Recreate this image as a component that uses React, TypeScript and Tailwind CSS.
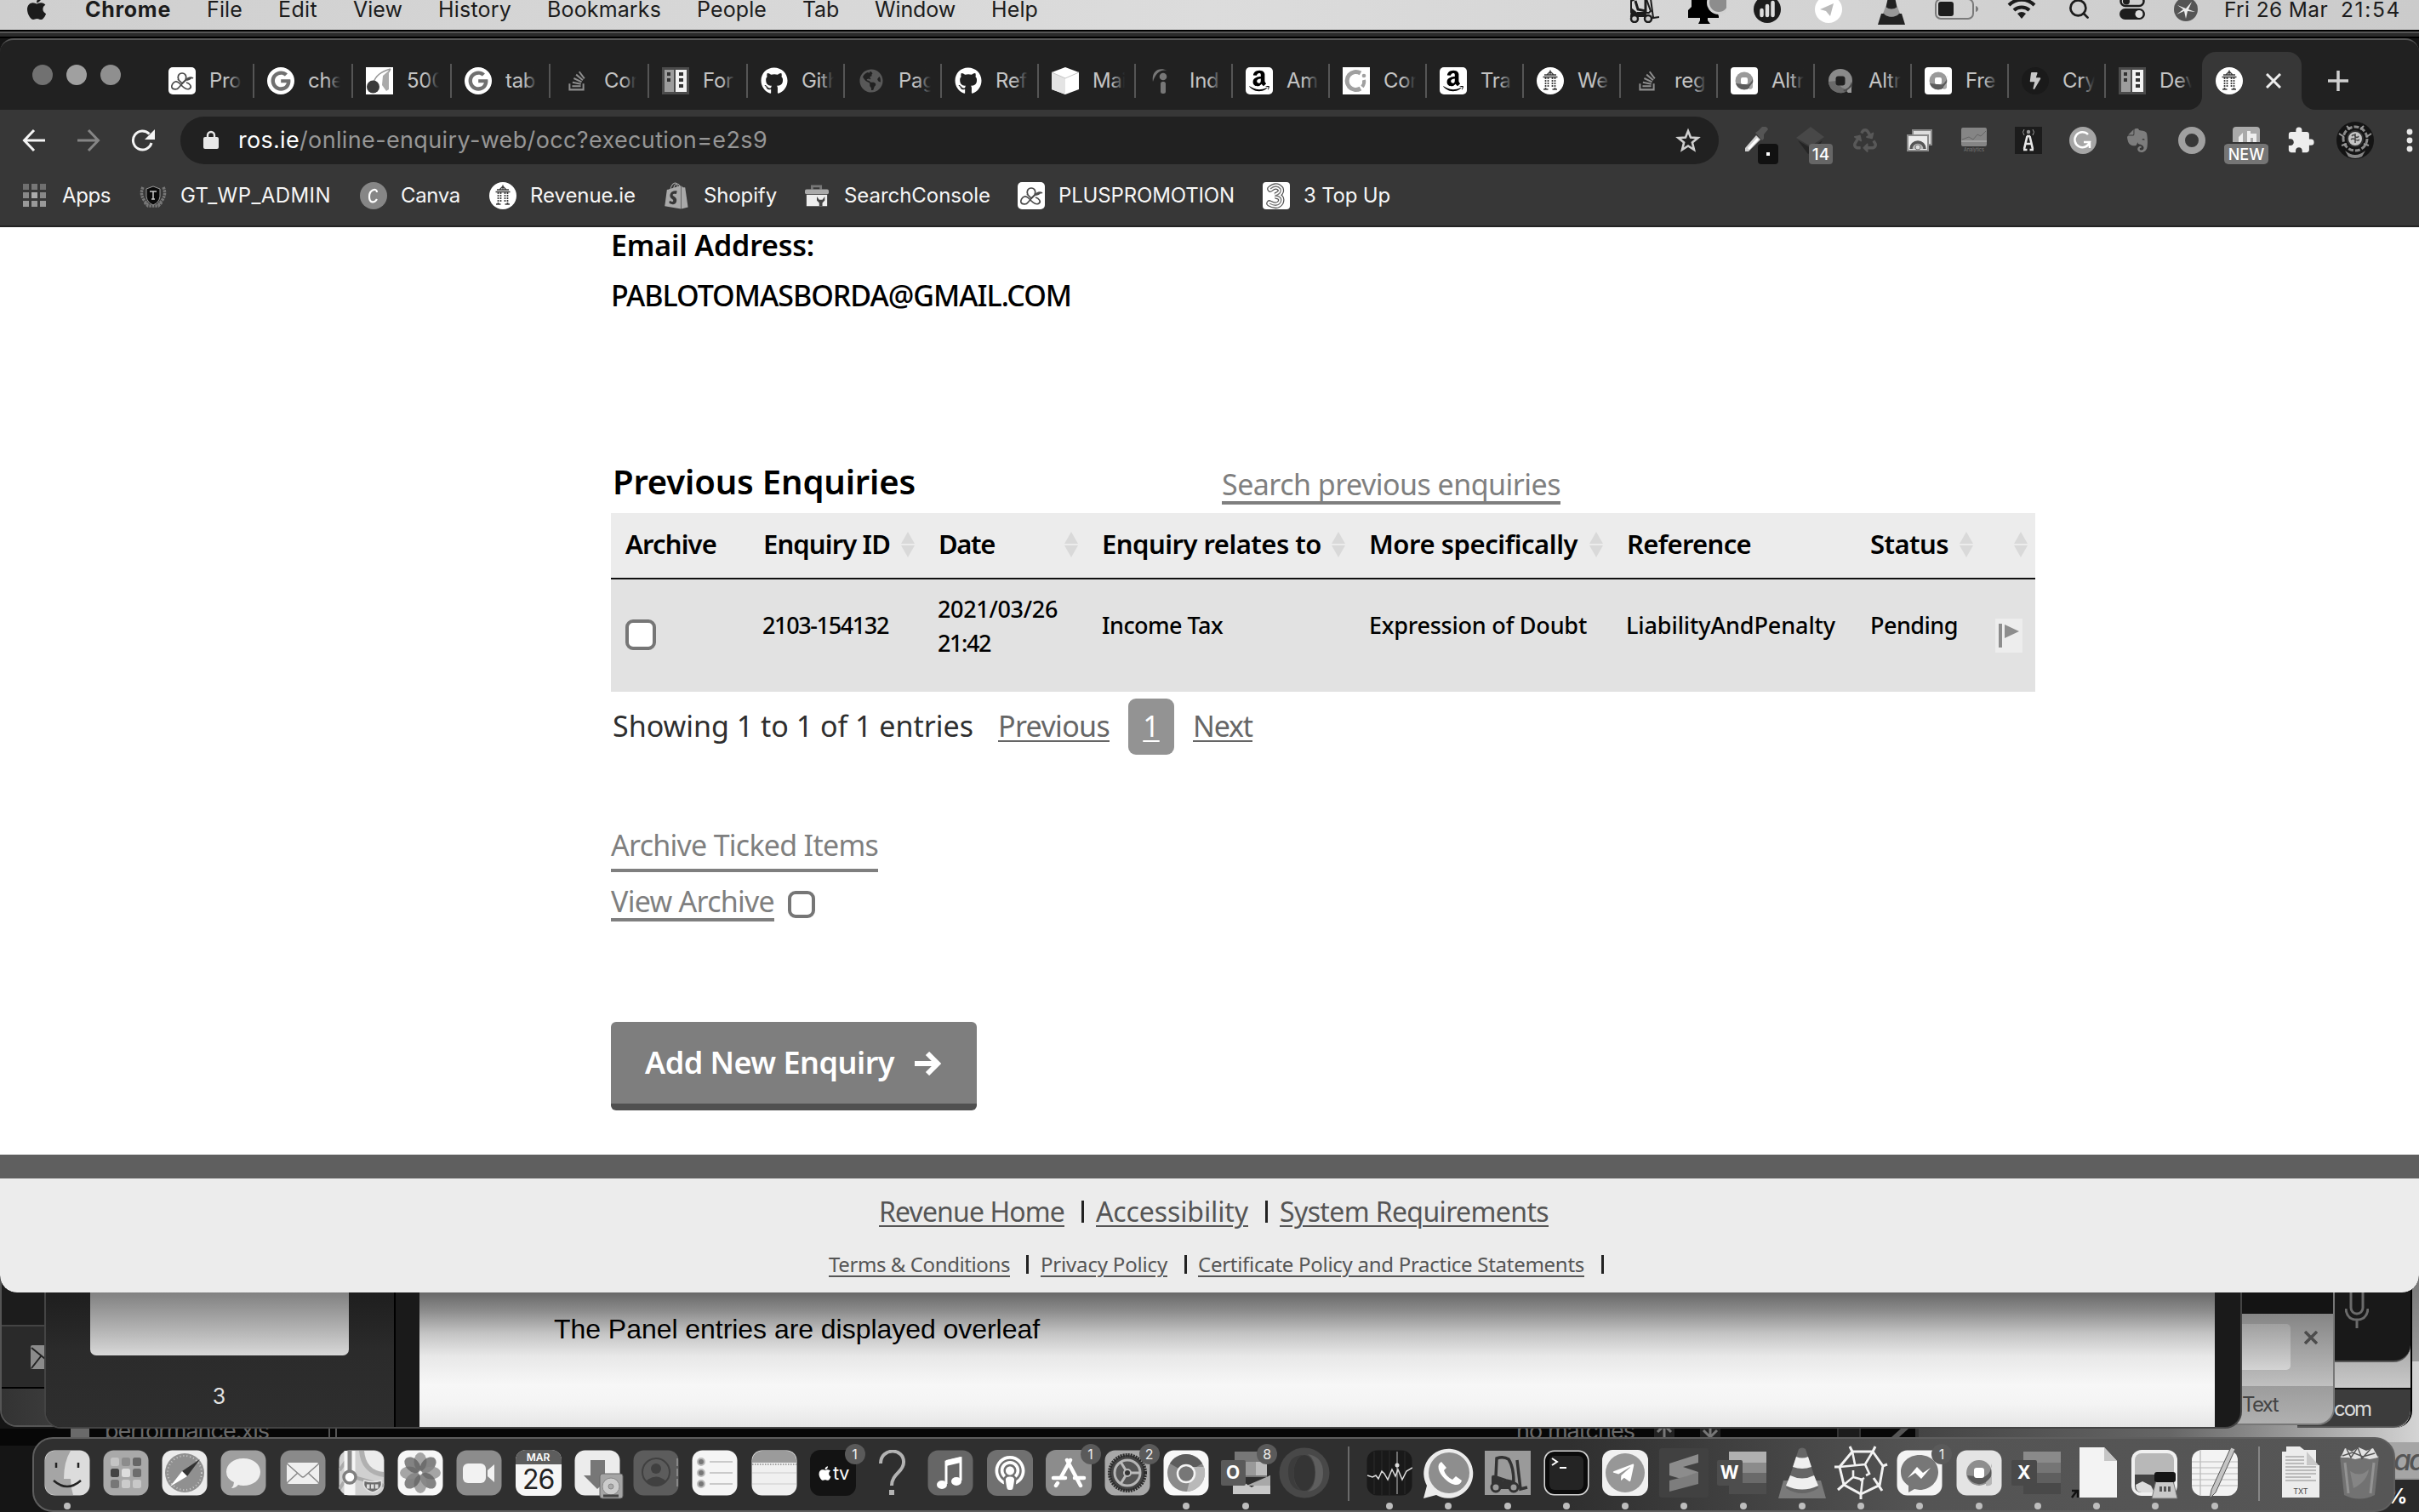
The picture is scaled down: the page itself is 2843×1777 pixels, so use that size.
import { useLayoutEffect, useRef, type ReactNode } from 'react';
import {
  FaApple, FaGithub, FaGoogle, FaStackOverflow, FaAmazon, FaShopify, FaEvernote, FaRecycle,
  FaGlobeAmericas, FaBolt, FaTelegramPlane, FaPodcast,
} from 'react-icons/fa';
import { MdExtension } from 'react-icons/md';
import { Search } from 'lucide-react';

/** One line of text whose tracking is adjusted so that it fills its box. */
function Fit({ className, children }: { className: string; children: string }) {
  const box = useRef<HTMLSpanElement>(null);
  const text = useRef<HTMLSpanElement>(null);
  useLayoutEffect(() => {
    const b = box.current, t = text.current;
    if (!b || !t) return;
    t.style.letterSpacing = '0px';
    const gap = b.clientWidth - t.getBoundingClientRect().width;
    t.style.letterSpacing = gap / children.length + 'px';
  }, [children]);
  return (
    <span ref={box} className={'block shrink-0 whitespace-nowrap ' + className}>
      <span ref={text}>{children}</span>
    </span>
  );
}

/* ---------- favicons ---------- */
const Box = ({ children }: { children: ReactNode }) => (
  <span className="flex size-8 shrink-0 items-center justify-center">{children}</span>
);
const Plus = () => (
  <svg viewBox="0 0 32 32" className="size-8 shrink-0">
    <rect width="32" height="32" rx="5" fill="#fff" />
    <g fill="none" stroke="#4a4a4a" strokeWidth="1.700" strokeLinejoin="round">
      <path d="M12 15c-2-4 0-8 4-8s6 4 4 8l-8 9c-2 3-7 2-8 0s1-6 4-7 5 2 8 5 6 5 9 3 0-6-4-7" />
      <path d="M11 14l5 5 7-6q3-2 6 0M20 15q5 0 7-3" />
    </g>
  </svg>
);
const Goog = () => (
  <Box><span className="flex size-8 items-center justify-center rounded-full bg-white"><FaGoogle className="size-6 text-[#707070]" /></span></Box>
);
const Cherry = () => (
  <svg viewBox="0 0 32 32" className="size-8 shrink-0">
    <rect width="32" height="32" fill="#fff" />
    <path d="M9 18C11 11 18 5 29 2M29 2c-4 6-5 9-4 14" stroke="#999" strokeWidth="1.500" fill="none" />
    <path d="M20 10l7-6v22l-3 2-5-7z" fill="#aaa" />
    <circle cx="8.500" cy="23" r="7.500" fill="#3a3a3a" />
  </svg>
);
const Stack = () => <Box><FaStackOverflow className="size-[26px] text-[#8e8e8e]" /></Box>;
const Server = () => (
  <svg viewBox="0 0 32 32" className="size-8 shrink-0">
    <rect width="32" height="32" fill="#4b4b4b" />
    <path d="M3 3h11v26H3z" fill="#9d9d9d" /><path d="M16 3h13v26H16z" fill="#f2f2f2" />
    <path d="M6 6h4v4H6zM6 13h4v4H6zM20 6h5v4h-5zM20 13h5v4h-5zM20 20h5v4h-5z" fill="#333" />
  </svg>
);
const Git = () => <Box><FaGithub className="size-8 text-white" /></Box>;
const Globe = () => <Box><FaGlobeAmericas className="size-7 text-[#585858]" /></Box>;
const Cube = () => (
  <svg viewBox="0 0 32 32" className="size-8 shrink-0">
    <path d="M16 0l16 6v20l-16 6L0 26V6z" fill="#fff" />
    <path d="M0 6l16 7v19L0 26z" fill="#e4e4e4" /><path d="M0 6l16 7 16-7" fill="none" stroke="#c4c4c4" />
  </svg>
);
const Indeed = () => (
  <svg viewBox="0 0 32 32" className="size-8 shrink-0">
    <path d="M5 17C3 6 11-1 22 4 13 2 8 8 5 17z" fill="#777" />
    <circle cx="17" cy="11" r="4.300" fill="#777" /><rect x="14" y="17" width="6" height="14" rx="2.500" fill="#777" />
  </svg>
);
const Amz = () => (
  <Box><span className="flex size-8 items-center justify-center rounded-[5px] bg-white"><FaAmazon className="size-7 text-black" /></span></Box>
);
const Cc = () => (
  <svg viewBox="0 0 32 32" className="size-8 shrink-0">
    <rect width="32" height="32" fill="#fff" />
    <path d="M21 7A10.500 10.500 0 1 0 21 25" fill="none" stroke="#a0a0a0" strokeWidth="5" />
    <path d="M25 15q1 4-2 8" stroke="#a0a0a0" strokeWidth="4" fill="none" /><circle cx="25" cy="10" r="2.300" fill="#a0a0a0" />
  </svg>
);
const Harp = () => (
  <svg viewBox="0 0 32 32" className="size-8 shrink-0">
    <circle cx="16" cy="16" r="16" fill="#fff" />
    <g stroke="#3c3c3c" fill="none">
      <path d="M16 3.500v5M16 5l-4 4M16 5l4 4M9 9h14M7.500 11.500h17" strokeWidth="1.300" />
      <path d="M10.500 12v14M13.500 12v12M18.500 12v12M21.500 12v14" strokeWidth="1.700" strokeDasharray="2 1" />
      <path d="M8 26h5.500M18.500 26H24" strokeWidth="1.500" />
    </g>
  </svg>
);
const Alt = ({ bg }: { bg?: boolean }) =>
  bg ? (
    <svg viewBox="0 0 32 32" className="size-8 shrink-0">
      <rect width="32" height="32" rx="4" fill="#fff" />
      <circle cx="16" cy="16" r="10.500" fill="#9a9a9a" />
      <path d="M6 19a10.500 10.500 0 0 0 20 0V9.500a10 10 0 0 1-6 11z" fill="#5c5c5c" />
      <path d="M22 23l4-5v6q-1 2-4 2z" fill="#aaa" />
      <rect x="12" y="12" width="8" height="8" rx="2" fill="#fff" />
    </svg>
  ) : (
    <svg viewBox="0 0 32 32" className="size-8 shrink-0">
      <circle cx="15" cy="16" r="14" fill="#8a8a8a" />
      <path d="M1 17a14 14 0 0 0 24 9q-10 0-15-10z" fill="#6a6a6a" />
      <path d="M28 17q-2 8-10 10l3 2q5-1 8-6z" fill="#4b4b4b" />
      <path d="M23 27l5-4v7h-4q-2-1-1-3z" fill="#999" />
      <rect x="9.500" y="10.500" width="11" height="11" rx="3" fill="#212121" />
    </svg>
  );
const Bolt = () => (
  <Box><span className="flex size-8 items-center justify-center rounded-full bg-[#1a1a1a]"><FaBolt className="size-5 text-[#c8c8c8]" /></span></Box>
);

const wideTabs: [ReactNode, string][] = [
  [<Plus />, 'Pro'], [<Goog />, 'che'], [<Cherry />, '500'], [<Goog />, 'tab'], [<Stack />, 'Cor'], [<Server />, 'For'],
];
const tabs: [ReactNode, string][] = [
  [<Git />, 'Gith'], [<Globe />, 'Pag'], [<Git />, 'Ref'], [<Cube />, 'Mai'], [<Indeed />, 'Ind'],
  [<Amz />, 'Am'], [<Cc />, 'Cor'], [<Amz />, 'Tra'], [<Harp />, 'We'], [<Stack />, 'reg'], [<Alt bg />, 'Altr'],
  [<Alt />, 'Altr'], [<Alt bg />, 'Fre'], [<Bolt />, 'Cry'], [<Server />, 'Dev'],
];
function Tab({ icon, label, last, wide }: { icon: ReactNode; label: string; last?: boolean; wide?: boolean }) {
  return (
    <div className={'flex h-10 shrink-0 items-center pl-[15px] ' + (wide ? 'w-[116px] ' : 'w-[114px] ') + (last ? '' : 'border-r-2 border-[#555]')}>
      {icon}
      <span className="relative ml-4 block w-[38px] overflow-hidden whitespace-nowrap text-[24px] leading-10 tracking-[-0.3px] text-[#c4c4c4]">
        {label}
        <span className="absolute inset-y-0 right-0 w-4 bg-gradient-to-r from-transparent to-[#212121]" />
      </span>
    </div>
  );
}

/* ---------- menu bar ---------- */
function MenuBar() {
  return (
    <div className="flex h-[35px] w-full shrink-0 items-start bg-gradient-to-r from-[#cfcfcf] via-[#dcdcdc] to-[#cbcbcb] text-[25px] leading-[22px] text-[#1c1c1c]">
      <FaApple className="-mt-[5px] ml-[28px] size-[30px]" />
      <Fit className="ml-[42px] w-[101px] font-bold">Chrome</Fit>
      <Fit className="ml-[42px] w-[42px]">File</Fit>
      <Fit className="ml-[42px] w-[46px]">Edit</Fit>
      <Fit className="ml-[42px] w-[58px]">View</Fit>
      <Fit className="ml-[42px] w-[86px]">History</Fit>
      <Fit className="ml-[42px] w-[134px]">Bookmarks</Fit>
      <Fit className="ml-[42px] w-[82px]">People</Fit>
      <Fit className="ml-[42px] w-[43px]">Tab</Fit>
      <Fit className="ml-[42px] w-[95px]">Window</Fit>
      <Fit className="ml-[42px] w-[55px]">Help</Fit>
      <svg viewBox="0 0 36 36" className="-mt-[9px] ml-[694px] size-9" fill="none" stroke="#1c1c1c" strokeWidth="2">
        <path d="M3 24V10l5-2h13l5 14-2 2H10" /><path d="M4 20l6 5h9l3 3H3z" fill="#1c1c1c" /><path d="M8 10l3 10 9 2V8" strokeWidth="3" /><path d="M25 0l4 30 7-1" />
        <circle cx="7" cy="31" r="4" strokeWidth="2.500" fill="#ccc" /><circle cx="23" cy="31" r="4" strokeWidth="2.500" fill="#ccc" />
      </svg>
      <svg viewBox="0 0 48 36" className="-mt-[8px] ml-[31px] h-9 w-12">
        <path d="M7 0h30v22l2 5v2H3V20l4-4zM17 29h9v3l3 4H15l2-4z" fill="#000" /><circle cx="39" cy="11" r="14" fill="#d2d2d2" /><circle cx="39" cy="11" r="11" fill="#8d8d8d" />
      </svg>
      <svg viewBox="0 0 32 32" className="-mt-[5px] ml-[32px] size-8">
        <circle cx="16" cy="16" r="16" fill="#1c1c1c" /><path d="M9.500 17v6M16 12v11M22.500 8v15" stroke="#ddd" strokeWidth="4.500" strokeLinecap="round" />
      </svg>
      <svg viewBox="0 0 32 32" className="-mt-[5px] ml-[40px] size-8">
        <circle cx="16" cy="16" r="16" fill="#fff" /><path d="M6 16L22 9l-4 15-5-6z" fill="#bbb" />
      </svg>
      <svg viewBox="0 0 32 34" className="-mt-[5px] ml-[42px] h-[34px] w-8">
        <path d="M12 2h8l4 18H8z" fill="#222" /><path d="M12 0h8l1 5H11zM9 13q7 5 14 0l3 8c-5 5-15 5-20 0z" fill="#999" /><path d="M4 21h3c4 5 14 5 18 0h3l4 13H0z" fill="#222" />
      </svg>
      <svg viewBox="0 0 52 26" className="-mt-[2px] ml-[35px] h-[26px] w-[52px]">
        <rect x="1" y="1" width="44" height="23" rx="6" fill="none" stroke="#7a7a7a" strokeWidth="2" /><rect x="4" y="4" width="18" height="17" rx="3" fill="#1c1c1c" /><path d="M48 9c4 1 4 6 0 7z" fill="#7a7a7a" />
      </svg>
      <svg viewBox="0 0 34 26" className="-mt-[4px] ml-[33px] h-[26px] w-[34px]" fill="none" stroke="#1c1c1c" strokeWidth="4">
        <path d="M2 10a21 21 0 0 1 30 0M8 16a13 13 0 0 1 18 0" /><path d="M12 20q5-4 10 0l-5 6z" fill="#1c1c1c" stroke="none" />
      </svg>
      <Search className="-mt-[3px] ml-[37px] size-[27px] text-[#1c1c1c]" strokeWidth={2.4} />
      <svg viewBox="0 0 30 28" className="-mt-[5px] ml-[34px] h-[28px] w-[30px]">
        <rect x="1.500" y="1" width="27" height="11" rx="5.500" fill="none" stroke="#1c1c1c" strokeWidth="2.500" /><circle cx="8" cy="6.500" r="4" fill="#1c1c1c" />
        <rect x="0" y="15" width="30" height="13" rx="6.500" fill="#1c1c1c" /><circle cx="23" cy="21.500" r="4.500" fill="#ddd" />
      </svg>
      <svg viewBox="0 0 28 28" className="-mt-[3px] ml-[34px] size-7">
        <circle cx="14" cy="14" r="14" fill="#555" /><path d="M4 9l10 4 7-8-4 9 8 3-9-1-2 9-2-9-9 4 8-6z" fill="#eee" />
      </svg>
      <Fit className="ml-[31px] w-[122px] text-[24.500px]">Fri 26 Mar</Fit>
      <Fit className="ml-[15px] w-[71px] text-[24.500px]">21:54</Fit>
    </div>
  );
}

/* ---------- toolbar ---------- */
function Toolbar() {
  return (
    <div className="flex h-[72px] items-center text-[#f1f1f1]">
      <svg viewBox="0 0 28 28" className="ml-[26px] size-7 shrink-0" fill="none" stroke="#f4f4f4" strokeWidth="3"><path d="M27 14H3M14 2L2.500 14 14 26" /></svg>
      <svg viewBox="0 0 28 28" className="ml-[36px] size-7 shrink-0" fill="none" stroke="#858585" strokeWidth="3"><path d="M1 14h24M14 2l11.500 12L14 26" /></svg>
      <svg viewBox="0 0 28 28" className="ml-[36px] size-7 shrink-0"><path d="M24 17A11 11 0 1 1 21.500 6.500" fill="none" stroke="#f4f4f4" strokeWidth="3" /><path d="M28 1v12H16z" fill="#f4f4f4" /></svg>
      <div className="ml-[30px] flex h-14 w-[1808px] shrink-0 items-center rounded-full bg-[#212121]">
        <svg viewBox="0 0 18 24" className="ml-[27px] h-6 w-[18px]"><rect y="8" width="18" height="14" rx="2" fill="#e8e8e8" /><path d="M5 9V6a4 4 0 0 1 8 0v3" fill="none" stroke="#e8e8e8" strokeWidth="2.400" /></svg>
        <Fit className="ml-[23px] w-[72px] text-[27px] text-white">ros.ie</Fit>
        <Fit className="w-[550px] text-[27px] text-[#969696]">/online-enquiry-web/occ?execution=e2s9</Fit>
        <svg viewBox="0 0 30 30" className="ml-auto mr-[21px] size-[30px]"><path d="M15 4l3 7.500 8.500.6-6.600 5.400 2.100 8.500L15 21.500 8 26l2.100-8.500-6.600-5.400 8.500-.6z" fill="none" stroke="#cfcfcf" strokeWidth="2.600" /></svg>
      </div>
      <div className="ml-[12px] flex shrink-0 items-center">
        <span className="relative flex w-16 justify-center">
          <svg viewBox="0 0 32 32" className="size-8"><path d="M3 25L16 10l5 5L7 29H3z" fill="#cfcfcf" /><path d="M6 25L17 13l2 2L8 27z" fill="#fff" /><path d="M15 7l3-2 5-5q6-1 7 3l-5 6v5l-2 2z" fill="#555" /></svg>
          <span className="absolute left-[34px] top-[20px] flex h-6 w-6 items-center justify-center rounded-[4px] bg-[#111]"><span className="size-[4px] bg-white" /></span>
        </span>
        <span className="relative flex w-16 justify-center">
          <svg viewBox="0 0 34 34" className="size-[34px]"><path d="M17 1l16 12-16 11L0 14z" fill="#484848" /><path d="M2 17l15 9 14-9-5 8-12 8z" fill="#252525" /></svg>
          <span className="absolute left-[30px] top-[21px] h-6 w-7 rounded-[4px] bg-[#666] text-center text-[19px] font-medium leading-[26px] text-white">14</span>
        </span>
        <span className="flex w-16 justify-center"><FaRecycle className="size-[28px] text-[#585858]" /></span>
        <span className="flex w-16 justify-center">
          <svg viewBox="0 0 32 28" className="h-7 w-8"><path d="M8 2h22v17H8z" fill="#ddd" stroke="#8a8a8a" strokeWidth="2" /><path d="M2 8h24v18H2z" fill="#ececec" stroke="#8a8a8a" strokeWidth="2" /><path d="M6 24a8 8 0 0 1 16 0" fill="#bbb" stroke="#555" strokeWidth="3.500" /><circle cx="14" cy="22" r="3" fill="#ddd" stroke="#777" /></svg>
        </span>
        <span className="flex w-16 flex-col items-center">
          <svg viewBox="0 0 30 22" className="h-[22px] w-[30px]"><rect width="30" height="22" rx="2" fill="#858585" /><path d="M1 14l8-3 5 3 5-6 4 2 6-6" fill="none" stroke="#666" /><path d="M0 16h30" stroke="#bbb" /></svg>
          <span className="text-[5.500px] leading-[8px] text-[#7a7a7a]">Analytics</span>
        </span>
        <span className="flex w-16 justify-center">
          <svg viewBox="0 0 32 32" className="size-8"><rect width="32" height="32" fill="#1c1c1c" /><path d="M14.500 11l-3.500 15M17.500 11L21 26M12 20h8M10 27h4.500M17.500 27H22M14 11h4" stroke="#e8e8e8" strokeWidth="2.600" fill="none" /><path d="M11 3q-3 3 0 7M21 3q3 3 0 7" stroke="#999" fill="none" /><circle cx="16" cy="6" r="2.200" fill="#999" /></svg>
        </span>
        <span className="flex w-16 justify-center">
          <svg viewBox="0 0 32 32" className="size-8"><circle cx="16" cy="16" r="16" fill="#a6a6a6" /><path d="M22 9A9 9 0 1 0 24 18h-7M24 17v8" fill="none" stroke="#fff" strokeWidth="2.500" /></svg>
        </span>
        <span className="flex w-16 justify-center"><FaEvernote className="size-8 text-[#7d7d7d]" /></span>
        <span className="flex w-16 justify-center"><span className="size-8 rounded-full border-[8px] border-[#a0a0a0]" /></span>
        <span className="relative flex w-16 justify-center">
          <svg viewBox="0 0 32 32" className="size-8"><rect width="32" height="32" rx="4" fill="#aaa" /><path d="M7 20v-8l5-5v13M17 5v15h4v-7h3v7h4V8h-7V5" fill="#eee" /></svg>
          <span className="absolute left-[6px] top-[18px] h-[26px] w-[52px] rounded-[5px] border-t-2 border-[#333] bg-[#757575] text-center text-[18px] font-medium leading-[26px] text-white">NEW</span>
        </span>
        <span className="flex w-16 justify-center"><MdExtension className="size-[34px] text-[#eee]" /></span>
        <span className="flex w-16 justify-center">
          <svg viewBox="0 0 44 44" className="size-11"><circle cx="22" cy="22" r="22" fill="#141414" /><circle cx="22" cy="20" r="14" fill="none" stroke="#8a8a8a" strokeWidth="3" strokeDasharray="6 2" /><circle cx="22" cy="20" r="9" fill="#c4c4c4" stroke="#333" strokeWidth="2" /><path d="M18 17q2-3 4 0t4 0M17 21q2-2 5 0t5 0M22 14v11" stroke="#444" strokeWidth="1.500" fill="none" /><path d="M10 34q12 10 24 0l-4 7q-8 4-16 0z" fill="#858585" /><path d="M3 14l6 4M41 14l-6 4M6 28l6-2M38 28l-6-2M12 5l4 4M32 5l-4 4" stroke="#999" strokeWidth="2" /></svg>
        </span>
        <svg viewBox="0 0 8 28" className="ml-[28px] h-7 w-2"><circle cx="4" cy="4" r="3.400" fill="#e8e8e8" /><circle cx="4" cy="14" r="3.400" fill="#e8e8e8" /><circle cx="4" cy="24" r="3.400" fill="#e8e8e8" /></svg>
      </div>
    </div>
  );
}

function Bookmarks() {
  return (
    <div className="flex h-[57px] items-center text-[24px] text-[#f6f6f6]">
      <span className="ml-[27px] grid grid-cols-3 gap-[3px]">
        {['bg-[#6f6f6f]', 'bg-[#777]', 'bg-[#6f6f6f]', 'bg-[#888]', 'bg-[#aaa]', 'bg-[#888]', 'bg-[#999]', 'bg-[#999]', 'bg-[#999]'].map((c, i) => (
          <span key={i} className={'size-[7px] ' + c} />
        ))}
      </span>
      <Fit className="ml-[19px] w-[57px]">Apps</Fit>
      <svg viewBox="0 0 32 32" className="ml-[34px] size-8"><path d="M4 6q-5 11 6 20M28 6q5 11-6 20M6 24l4 4h12l4-4" fill="none" stroke="#777" strokeWidth="3.500" strokeDasharray="2.500 1" /><path d="M16 5l8 3v9q-1 7-8 10-7-3-8-10V8z" fill="#0a0a0a" stroke="#999" /><path d="M12 11h8M16 11v9M14 20h4" stroke="#ccc" strokeWidth="1.500" /></svg>
      <Fit className="ml-[16px] w-[177px]">GT_WP_ADMIN</Fit>
      <svg viewBox="0 0 32 32" className="ml-[34px] size-8"><circle cx="16" cy="16" r="16" fill="#868686" /><path d="M20 12c0-6-9-3-9 5s6 8 9 3" fill="none" stroke="#fff" strokeWidth="2.200" /></svg>
      <Fit className="ml-[16px] w-[70px]">Canva</Fit>
      <span className="ml-[34px]"><Harp /></span>
      <Fit className="ml-[16px] w-[124px]">Revenue.ie</Fit>
      <FaShopify className="ml-[32px] size-8 text-[#a9a9a9]" />
      <Fit className="ml-[16px] w-[86px]">Shopify</Fit>
      <svg viewBox="0 0 30 30" className="ml-[33px] size-[28px]"><path d="M9 7V3h11v4" fill="none" stroke="#777" strokeWidth="3" /><rect y="7" width="30" height="6" rx="2" fill="#aaa" /><path d="M2 14h26v14H2z" fill="#eee" /><path d="M15 16v5l3 3v4h4v-4l3-3v-5l-3 4h-4z" fill="#444" /></svg>
      <Fit className="ml-[18px] w-[172px]">SearchConsole</Fit>
      <span className="ml-[32px]"><Plus /></span>
      <Fit className="ml-[16px] w-[207px]">PLUSPROMOTION</Fit>
      <svg viewBox="0 0 32 32" className="ml-[33px] size-8"><rect width="32" height="32" rx="4" fill="#fff" /><path d="M9 8q7-6 12 0 2 5-6 8 9 1 6 8-4 6-13 1" fill="none" stroke="#555" strokeWidth="7.500" strokeLinecap="round" /><path d="M9 8q7-6 12 0 2 5-6 8 9 1 6 8-4 6-13 1" fill="none" stroke="#fff" strokeWidth="5" strokeLinecap="round" /><path d="M9 8q7-6 12 0 2 5-6 8 9 1 6 8-4 6-13 1" fill="none" stroke="#777" strokeWidth="1.300" /></svg>
      <Fit className="ml-[16px] w-[102px]">3 Top Up</Fit>
    </div>
  );
}

/* ---------- page ---------- */
const Sort = ({ className }: { className: string }) => (
  <svg viewBox="0 0 16 30" className={'h-[30px] w-4 shrink-0 ' + className}><path d="M8 0l8 14H0zM8 30l8-14H0z" fill="#d9d9d9" /></svg>
);

function Page() {
  return (
    <div className="flex h-[1090px] flex-col bg-white pl-[718px] font-['Noto_Sans',sans-serif] text-black">
      <Fit className="h-[43px] w-[239px] text-[34px] font-semibold leading-[43px]">Email Address:</Fit>
      <Fit className="mt-[15px] h-[45px] w-[541px] text-[34px] font-medium leading-[45px]">PABLOTOMASBORDA@GMAIL.COM</Fit>
      <div className="mt-[162px] flex h-[71px] items-start">
        <Fit className="ml-[2px] mt-[4px] w-[356px] text-[40px] font-semibold leading-[60px]">Previous Enquiries</Fit>
        <Fit className="ml-[360px] mt-[14px] h-[47px] w-[398px] border-b-4 border-[#7f7f7f] text-[34px] leading-[46px] text-[#7f7f7f]">Search previous enquiries</Fit>
      </div>
      <div className="w-[1674px] bg-[#ececec]">
        <div className="flex h-[78px] items-center border-b-[2px] border-[#111] pb-[3px] text-[31px] font-semibold">
          <Fit className="ml-[17px] w-[107px]">Archive</Fit>
          <Fit className="ml-[55px] w-[149px]">Enquiry ID</Fit>
          <Sort className="ml-[13px]" />
          <Fit className="ml-[28px] w-[66px]">Date</Fit>
          <Sort className="ml-[82px]" />
          <Fit className="ml-[28px] w-[258px]">Enquiry relates to</Fit>
          <Sort className="ml-[12px]" />
          <Fit className="ml-[28px] w-[245px]">More specifically</Fit>
          <Sort className="ml-[14px]" />
          <Fit className="ml-[28px] w-[146px]">Reference</Fit>
          <Fit className="ml-[140px] w-[92px]">Status</Fit>
          <Sort className="ml-[13px]" />
          <Sort className="ml-[48px]" />
        </div>
        <div className="flex h-[132px] items-start bg-[#e2e2e2] pt-[14px] text-[27px] font-medium leading-[40px]">
          <span className="ml-[17px] mt-[33px] size-9 shrink-0 rounded-[9px] border-4 border-[#767676] bg-white" />
          <Fit className="ml-[125px] mt-[20px] w-[148px]">2103-154132</Fit>
          <div className="ml-[58px] mt-[1px]">
            <Fit className="w-[141px]">2021/03/26</Fit>
            <Fit className="w-[62px]">21:42</Fit>
          </div>
          <Fit className="ml-[52px] mt-[20px] w-[142px]">Income Tax</Fit>
          <Fit className="ml-[172px] mt-[20px] w-[256px]">Expression of Doubt</Fit>
          <Fit className="ml-[46px] mt-[20px] w-[246px]">LiabilityAndPenalty</Fit>
          <Fit className="ml-[41px] mt-[20px] w-[103px]">Pending</Fit>
          <svg viewBox="0 0 32 40" className="ml-[44px] mt-[32px] h-10 w-8"><rect width="32" height="40" fill="#ededed" /><path d="M6 6v28" stroke="#8d8d8d" strokeWidth="4" /><path d="M11 7l17 8-17 8z" fill="#8d8d8d" /></svg>
        </div>
      </div>
      <div className="mt-[8px] flex h-[66px] items-center pb-px text-[34px]">
        <Fit className="ml-[2px] w-[424px] text-[#2e2e2e]">Showing 1 to 1 of 1 entries</Fit>
        <Fit className="ml-[29px] w-[131px] text-[#666] underline decoration-2 underline-offset-4">Previous</Fit>
        <span className="ml-[22px] flex h-[66px] w-[54px] shrink-0 items-center justify-center rounded-[9px] bg-[#939393] text-white underline decoration-2 underline-offset-4">1</span>
        <Fit className="ml-[22px] w-[70px] text-[#666] underline decoration-2 underline-offset-4">Next</Fit>
      </div>
      <Fit className="mt-[84px] h-[54px] w-[314px] border-b-4 border-[#7f7f7f] text-[34px] leading-[44px] text-[#7f7f7f]">Archive Ticked Items</Fit>
      <div className="mt-[10px] flex">
        <Fit className="h-[48px] w-[192px] border-b-4 border-[#7f7f7f] text-[34px] leading-[48px] text-[#7f7f7f]">View Archive</Fit>
        <span className="ml-[16px] mt-[12px] size-8 rounded-[9px] border-4 border-[#767676] bg-white" />
      </div>
      <div className="mt-[118px] flex h-[104px] w-[430px] items-center rounded-[6px] border-b-[8px] border-[#505050] bg-[#7e7e7e] text-white">
        <Fit className="ml-[40px] w-[293px] text-[36px] font-semibold">Add New Enquiry</Fit>
        <svg viewBox="0 0 32 28" className="ml-[24px] mt-px h-7 w-8" fill="none" stroke="#fff" strokeWidth="6"><path d="M0 14h27M15 2l12 12-12 12" /></svg>
      </div>
    </div>
  );
}

function Footer() {
  return (
    <div className="h-[162px] overflow-hidden rounded-b-[20px] border-t-[28px] border-[#5f5f5f] bg-[#ececec] font-['Noto_Sans',sans-serif] text-[#555]">
      <div className="mt-[11px] flex h-[56px] items-center pl-[1033px] text-[32px]">
        <Fit className="w-[218px] underline decoration-2 underline-offset-4">Revenue Home</Fit>
        <span className="ml-[20px] h-[26px] w-[3px] bg-[#222]" />
        <Fit className="ml-[14px] w-[179px] underline decoration-2 underline-offset-4">Accessibility</Fit>
        <span className="ml-[20px] h-[26px] w-[3px] bg-[#222]" />
        <Fit className="ml-[14px] w-[316px] underline decoration-2 underline-offset-4">System Requirements</Fit>
      </div>
      <div className="mt-[6px] flex h-[56px] items-center pl-[974px] text-[24px]">
        <Fit className="w-[213px] underline decoration-2 underline-offset-4">Terms &amp; Conditions</Fit>
        <span className="ml-[19px] h-[22px] w-[3px] bg-[#222]" />
        <Fit className="ml-[14px] w-[149px] underline decoration-2 underline-offset-4">Privacy Policy</Fit>
        <span className="ml-[20px] h-[22px] w-[3px] bg-[#222]" />
        <Fit className="ml-[13px] w-[454px] underline decoration-2 underline-offset-4">Certificate Policy and Practice Statements</Fit>
        <span className="ml-[20px] h-[22px] w-[3px] bg-[#222]" />
      </div>
    </div>
  );
}

/* ---------- windows behind the browser ---------- */
function BackWindows() {
  return (
    <div className="absolute inset-x-0 bottom-0 h-[277px] overflow-hidden bg-gradient-to-b from-[#777] to-[#ddd]">
      <div className="absolute bottom-0 left-0 h-[160px] w-[1089px] bg-[#151515]" />
      <div className="absolute left-0 top-[179px] h-[20px] w-[2255px] overflow-hidden border-r-4 border-[#333] bg-[#070707] text-[27px] leading-[28px] text-[#6a6a6a]">
        <div className="-mt-[11px] flex items-center">
          <span className="ml-[83px] h-7 w-[22px] bg-[#6a6a6a]" />
          <Fit className="ml-[18px] w-[193px]">performance.xls</Fit>
          <span className="ml-[70px] h-7 w-[10px] border-x-2 border-[#555]" />
          <Fit className="ml-[1386px] w-[139px]">no matches</Fit>
          <svg viewBox="0 0 24 24" className="ml-[23px] size-6 bg-[#222]" fill="none" stroke="#777" strokeWidth="3"><path d="M12 24V5M4 13l8-8 8 8" /></svg>
          <svg viewBox="0 0 24 24" className="ml-[30px] size-6 bg-[#222]" fill="none" stroke="#777" strokeWidth="3"><path d="M12 0v19M4 11l8 8 8-8" /></svg>
          <span className="ml-[137px] h-7 w-[28px] border-x-2 border-[#333] bg-[#1c1c1c]" />
          <svg viewBox="0 0 24 24" className="ml-[34px] size-6" stroke="#555" strokeWidth="6"><path d="M2 23L22 5" /></svg>
        </div>
      </div>
      <div className="absolute left-[2255px] top-[100px] h-[134px] w-[588px] bg-gradient-to-r from-[#444] via-[#666] to-[#d4d4d4]" />
      <div className="absolute bottom-0 right-0 flex h-[82px] w-[60px] flex-col justify-between bg-[#a5a5a5] text-[34px] leading-[42px] text-[#555]">
        <Fit className="ml-[30px] w-[36px] font-medium italic">ad</Fit>
        <span className="h-[43px] border-t-2 border-[#999] bg-[#2a2a2a] pl-[22px] text-[24px] font-bold leading-[40px] text-white">%</span>
      </div>
      {/* left edge window */}
      <div className="absolute left-0 top-0 h-[177px] w-[120px] overflow-hidden rounded-bl-[20px] border-b-2 border-l-2 border-[#555] bg-[#222]">
        <div className="h-[59px] border-b-2 border-[#444] bg-[#1c1c1c]" />
        <div className="flex h-[73px] items-center border-b-2 border-black bg-[#2a2a2a] pl-[34px]">
          <svg viewBox="0 0 34 28" className="h-7 w-[34px]"><rect width="34" height="28" rx="2" fill="#8b8b8b" /><path d="M1 3l16 13M1 27l11-14" stroke="#222" strokeWidth="2" /></svg>
        </div>
        <div className="h-[50px] bg-gradient-to-r from-[#333] to-[#444]" />
      </div>
      {/* right edge window */}
      <div className="absolute left-[2700px] top-0 h-[178px] w-[135px] overflow-hidden rounded-br-[20px] border-r-2 border-black bg-gradient-to-b from-[#777] to-[#e8e8e8]">
        <div className="flex h-[101px] items-start rounded-br-[20px] border-b-2 border-[#555] bg-[#191919] pl-[56px]">
          <svg viewBox="0 0 28 44" className="mt-[18px] h-[44px] w-7" fill="none" stroke="#6b6b6b" strokeWidth="3"><rect x="7" y="-6" width="14" height="32" rx="7" /><path d="M1 20q1 13 13 13t13-13M14 33v10" /></svg>
        </div>
        <div className="mt-[30px] h-[47px] rounded-br-[20px] border-b-2 border-t-2 border-b-[#555] border-t-[#111] bg-[#3c3c3c] pl-[43px]">
          <Fit className="w-[43px] text-[24px] leading-[46px] text-[#dcdcdc]">com</Fit>
        </div>
      </div>
      <div className="absolute left-[2600px] top-0 flex h-[175px] w-[144px] flex-col overflow-hidden rounded-br-[20px] border-b-2 border-r-2 border-[#777] bg-gradient-to-b from-[#999] from-70% to-[#b0b0b0]">
        <div className="h-[45px] bg-[#141414]" />
        <div className="flex h-[86px] bg-gradient-to-b from-[#858585] to-[#c0c0c0] pl-[34px] pt-[12px]">
          <div className="h-[54px] w-[58px] rounded-r-[5px] bg-gradient-to-b from-[#a0a0a0] to-[#d4d4d4]" />
          <svg viewBox="0 0 16 16" className="ml-[16px] mt-2 size-4" stroke="#4c4c4c" strokeWidth="3.500"><path d="M1 1l14 14M15 1L1 15" /></svg>
        </div>
        <Fit className="ml-[35px] w-[42px] text-[24px] leading-[44px] text-[#444]">Text</Fit>
      </div>
      {/* document window */}
      <div className="absolute left-[52px] top-0 flex h-[179px] w-[2583px] overflow-hidden rounded-b-[20px] border-x-2 border-b-2 border-[#444] bg-[#1a1a1a]">
        <div className="flex w-[411px] shrink-0 flex-col items-center border-r-2 border-black bg-gradient-to-b from-[#1b1b1b] via-[#2b2b2b] to-[#2e2e2e] pr-[2px]">
          <div className="h-[93px] w-[304px] rounded-b-[7px] bg-gradient-to-b from-[#6c6c6c] to-[#d8d8d8]" />
          <span className="mt-[32px] text-[25px] leading-[32px] text-[#e2e2e2]">3</span>
        </div>
        <div className="ml-[28px] w-[2110px] shrink-0 bg-[linear-gradient(to_bottom,#666_10%,#8c8c8c_23%,#c4c4c4_38%,#e8e8e8_53%,#f7f7f7_72%,#f4f4f4_85%,#e6e6e6)] pl-[158px] pt-[40px]">
          <Fit className="w-[571px] font-['Liberation_Sans',sans-serif] text-[32px] leading-[44px] text-black">The Panel entries are displayed overleaf</Fit>
        </div>
      </div>
    </div>
  );
}

/* ---------- dock ---------- */
const Tile = ({ fill, children }: { fill: string; children?: ReactNode }) => (
  <svg viewBox="0 0 54 54" className="size-[54px]">
    <rect x=".500" y=".500" width="53" height="53" rx="12" fill={fill} />
    {children}
  </svg>
);
const Office = ({ letter, bg }: { letter: string; bg: [string, string, string, string] }) => (
  <div className="relative -ml-1 h-[54px] w-[58px]">
    <svg viewBox="0 0 58 54" className="h-[54px] w-[58px]">
      <path d="M14 2h44v13H14z" fill={bg[0]} /><path d="M14 15h44v12H14z" fill={bg[1]} /><path d="M14 27h44v12H14z" fill={bg[2]} /><path d="M14 39h44v13H14z" fill={bg[3]} />
      <rect x="0" y="12" width="30" height="30" rx="2" fill={bg[3]} />
    </svg>
    <span className="absolute left-0 top-3 w-[30px] text-center text-[21px] font-bold leading-[30px] text-white">{letter}</span>
  </div>
);
const Round = ({ children, className }: { children: ReactNode; className: string }) => (
  <span className={'flex size-[54px] items-center justify-center rounded-[12px] ' + className}>{children}</span>
);

type DockEntry = { icon: ReactNode; dot?: boolean; badge?: string };

const dockLeft: DockEntry[] = [
  { dot: true, icon: (
    <Tile fill="#dcdcdc"><path d="M27 1H13A12 12 0 0 0 1 13v28a12 12 0 0 0 12 12h21q-3-9-3-19h-8q0-20 8-33z" fill="#a5a5a5" /><path d="M14 15v6M40 15v6M11 36q16 14 32 0" fill="none" stroke="#222" strokeWidth="2.500" /></Tile>) },
  { icon: (
    <Tile fill="#a9a9a9">{[9, 22, 35].map((y, r) => [9, 22, 35].map((x, c) => <rect key={x + '-' + y} x={x} y={y} width="10" height="10" rx="2.500" fill={['#c4c4c4', '#8c8c8c', '#666', '#444', '#ddd', '#6d6d6d', '#777', '#ccc', '#c8c8c8'][r * 3 + c]} />))}</Tile>) },
  { icon: (
    <Tile fill="#ececec"><circle cx="27" cy="27" r="23" fill="#909090" /><circle cx="27" cy="27" r="20" fill="none" stroke="#ccc" strokeWidth="2" strokeDasharray="1 3" /><path d="M45 11L30 31l-6-6z" fill="#333" /><path d="M10 43l14-18 6 6z" fill="#fff" /></Tile>) },
  { icon: <Tile fill="#9f9f9f"><path d="M27 10c12 0 20 7 20 16s-8 16-20 16q-4 0-6-1-3 4-8 4 3-3 3-7-9-4-9-12C7 17 15 10 27 10z" fill="#efefef" /></Tile> },
  { icon: <Tile fill="#8a8a8a"><rect x="8" y="15" width="38" height="25" rx="3" fill="#efefef" /><path d="M8 16l17 15q2 2 4 0l17-15M8 39l13-12M46 39L33 27" fill="none" stroke="#888" strokeWidth="1.500" /></Tile> },
  { icon: (
    <Tile fill="#d0d0d0"><path d="M24 1h18a12 12 0 0 1 11 11v20Q26 28 24 1z" fill="#b0b0b0" /><path d="M30 1h12a12 12 0 0 1 11 11v14Q32 24 30 1z" fill="#ececec" /><path d="M18 32L53 42M8 14L1 24M6 38l-5 8" stroke="#aaa" strokeWidth="4" fill="none" /><path d="M13 1v52" stroke="#f6f6f6" strokeWidth="13" /><path d="M13 1v30" stroke="#8a8a8a" strokeWidth="5" /><circle cx="13" cy="32" r="7" fill="#fff" stroke="#808080" strokeWidth="3.500" /><path d="M30 36q10 3 20 0 3 10-10 14-13-4-10-14z" fill="#6c6c6c" stroke="#e4e4e4" strokeWidth="1.500" /><path d="M33 43h14" stroke="#ddd" strokeWidth="5" strokeDasharray="3.500 1.500" /></Tile>) },
  { icon: (
    <Tile fill="#f7f7f7">{[0, 45, 90, 135, 180, 225, 270, 315].map((a, i) => <ellipse key={a} cx="27" cy="14" rx="7.500" ry="11" transform={`rotate(${a} 27 27)`} fill={i % 2 ? '#5c5c5c' : '#8a8a8a'} fillOpacity=".75" />)}</Tile>) },
  { icon: <Tile fill="#8c8c8c"><rect x="8" y="16" width="27" height="23" rx="6" fill="#f2f2f2" /><path d="M37 24l8-7v21l-8-7z" fill="#f2f2f2" /></Tile> },
  { icon: (
    <div className="size-[54px] overflow-hidden rounded-[12px] bg-[#f6f6f6] text-center">
      <div className="h-[17px] bg-[#5d5d5d] text-[12px] font-semibold leading-[18px] text-white">MAR</div>
      <div className="text-[32px] leading-[35px] tracking-[-1px] text-[#222]">26</div>
    </div>) },
  { icon: (
    <svg viewBox="0 0 58 58" className="-mb-1 -mr-1 size-[58px]"><rect x=".500" y=".500" width="53" height="53" rx="12" fill="#ececec" /><path d="M19 12h17v18h8L27 46 11 30h8z" fill="#777" /><rect x="30" y="28" width="27" height="29" rx="3" fill="#a5a5a5" stroke="#666" /><circle cx="43" cy="43" r="10" fill="#ccc" stroke="#888" /><circle cx="43" cy="43" r="3" fill="#aaa" stroke="#888" /><path d="M34 54h18" stroke="#444" strokeWidth="3" /></svg>) },
  { icon: <Tile fill="#5c5c5c"><circle cx="27" cy="26" r="16" fill="none" stroke="#404040" strokeWidth="2" /><circle cx="27" cy="22" r="6" fill="#404040" /><path d="M15 37q12-11 24 0-12 9-24 0z" fill="#404040" /><path d="M52 10v34" stroke="#888" strokeWidth="2" strokeDasharray="9 3" /></Tile> },
  { icon: (
    <Tile fill="#f5f5f5">{[14, 27, 40].map((y) => <g key={y}><circle cx="11" cy={y} r="4" fill="#777" stroke="#bbb" strokeWidth="2" /><path d={`M21 ${y}h27`} stroke="#bbb" strokeWidth="1.500" /></g>)}</Tile>) },
  { icon: <Tile fill="#f0f0f0"><path d="M1 15V13A12 12 0 0 1 13 1h28a12 12 0 0 1 12 12v2z" fill="#9b9b9b" /><path d="M1 17h52" stroke="#888" strokeWidth="1.500" strokeDasharray="1.500 1.500" /><path d="M1 27h52M1 40h52" stroke="#ccc" /></Tile> },
  { badge: '1', icon: <Round className="bg-[#131313] text-white"><FaApple className="size-[19px] shrink-0" /><span className="text-[22px] leading-5 tracking-[-0.5px]">tv</span></Round> },
  { icon: <svg viewBox="0 0 54 54" className="size-[54px]"><path d="M14 16C14-3 42-3 41 15c0 11-14 13-14 27" fill="none" stroke="#b3b3b3" strokeWidth="4" /><path d="M24 47h6v6h-6z" fill="#b3b3b3" /></svg> },
  { icon: <Tile fill="#666"><path d="M22 40V14l17-4v26" fill="none" stroke="#fff" strokeWidth="3" /><path d="M22 12l17-4v7l-17 4z" fill="#fff" /><ellipse cx="17" cy="41" rx="6" ry="5" fill="#fff" /><ellipse cx="34" cy="37" rx="6" ry="5" fill="#fff" /></Tile> },
  { icon: <Round className="bg-[#707070] text-white"><FaPodcast className="size-10" /></Round> },
  { badge: '1', icon: <Round className="bg-[#8c8c8c]"><svg viewBox="0 0 54 54" className="size-[54px]"><path d="M29 12L18 32M14 39l-2 3M25 12l16 30M9 33h14M34 33h11" fill="none" stroke="#fff" strokeWidth="4.500" strokeLinecap="round" /></svg></Round> },
  { badge: '2', icon: (
    <Tile fill="#a8a8a8"><circle cx="27" cy="27" r="21" fill="#444" stroke="#2b2b2b" strokeWidth="4" strokeDasharray="2 1" /><circle cx="27" cy="27" r="15" fill="#555" stroke="#b5b5b5" strokeWidth="3" /><path d="M27 27h15M27 27l-8-13M27 27l-8 13" stroke="#bbb" strokeWidth="3" /><circle cx="27" cy="27" r="4" fill="#333" stroke="#bbb" strokeWidth="2" /></Tile>) },
  { dot: true, icon: (
    <Tile fill="#f8f8f8"><circle cx="27" cy="27" r="22" fill="#8a8a8a" /><path d="M27 27L8 16A22 22 0 0 1 46 16z" fill="#5d5d5d" /><path d="M35 20h13a22 22 0 0 1-20 29z" fill="#b9b9b9" /><circle cx="27" cy="28" r="10" fill="#777" stroke="#f5f5f5" strokeWidth="2.500" /></Tile>) },
  { dot: true, badge: '8', icon: (
    <div className="relative h-[54px] w-[58px]">
      <svg viewBox="0 0 58 54" className="h-[54px] w-[58px]"><path d="M16 2h38v30H16z" fill="#777" /><path d="M29 14h12v16H29z" fill="#999" /><path d="M41 14h13v16H41z" fill="#bcbcbc" /><path d="M14 30l22 14 22-14v22H14z" fill="#c8c8c8" /><path d="M30 42h28V30z" fill="#a8a8a8" /><rect x="0" y="12" width="29" height="30" rx="2" fill="#5a5a5a" /></svg>
      <span className="absolute left-0 top-3 w-[29px] text-center text-[21px] font-bold leading-[30px] text-white">O</span>
    </div>) },
  { icon: <svg viewBox="0 0 60 60" className="size-[60px] shrink-0"><circle cx="30" cy="30" r="29.500" fill="#484848" /><ellipse cx="30" cy="30" rx="12.500" ry="21" fill="#353535" /><path d="M30 9q-12 2-12.500 21T30 51q-18 0-19-21T30 9z" fill="#3c3c3c" /><path d="M34 8q18 3 18 22T34 52q9-6 9-22T34 8z" fill="#5e5e5e" /></svg> },
];

const dockRight: DockEntry[] = [
  { dot: true, icon: <Tile fill="#191919"><path d="M9 2v50M18 1v52M27 1v52M45 2v50" stroke="#2c2c2c" /><path d="M36 2v50" stroke="#888" strokeWidth="1.500" /><circle cx="36" cy="18" r="2.500" fill="#ddd" /><path d="M1 30l6 2 4-2 3 4 4-9 3 3 4 7 5-12 4 8 3-8 5 12 5-10 7-4" fill="none" stroke="#ddd" strokeWidth="1.500" /></Tile> },
  { dot: true, icon: (
    <svg viewBox="0 0 60 60" className="size-[60px] shrink-0"><path d="M1 60l4-15a29 29 0 1 1 11 11z" fill="#ececec" /><circle cx="31" cy="30" r="24" fill="#8e8e8e" /><path d="M22 17c-6 3-4 12 4 20s18 10 20 2l-7-5-4 4q-8-4-10-11l3-3z" fill="#fff" /></svg>) },
  { dot: true, icon: (
    <svg viewBox="0 0 54 54" className="size-[54px]"><rect y="1" width="54" height="52" fill="#9a9a9a" /><path d="M8 46V32q0-3 4-2l10 7h10l5 9z" fill="#333" /><path d="M13 32l1-22q8-3 14 1 6 9 6 27l-9-2z" fill="none" stroke="#333" strokeWidth="3.500" /><path d="M38 12l4 34 8-2" fill="none" stroke="#333" strokeWidth="3.500" /><circle cx="13" cy="44" r="5" fill="#9a9a9a" stroke="#333" strokeWidth="3" /><circle cx="34" cy="44" r="5" fill="#9a9a9a" stroke="#333" strokeWidth="3" /></svg>) },
  { dot: true, icon: <Tile fill="#d8d8d8"><rect x="2" y="2" width="50" height="50" rx="11" fill="#0b0b0b" /><rect x="7" y="7" width="40" height="40" rx="6" fill="#242424" /><path d="M10 10l6 4-6 4M19 21h8" fill="none" stroke="#fff" strokeWidth="2" /></Tile> },
  { dot: true, icon: <Round className="bg-[#f1f1f1]"><span className="flex size-[46px] items-center justify-center rounded-full bg-[#979797]"><FaTelegramPlane className="-ml-1 size-7 text-white" /></span></Round> },
  { dot: true, icon: <svg viewBox="0 0 58 58" className="size-[58px] shrink-0"><rect width="58" height="58" rx="3" fill="#414141" /><path d="M46 7L12 18v14l34 10V28L28 22l18-5z" fill="#8c8c8c" /><path d="M46 28v14L12 51V38l20-5z" fill="#7d7d7d" /></svg> },
  { dot: true, icon: <Office letter="W" bg={['#b0b0b0', '#8b8b8b', '#6a6a6a', '#4d4d4d']} /> },
  { dot: true, icon: <svg viewBox="0 0 56 62" className="h-[62px] w-[56px] shrink-0"><path d="M6 40h44l6 21H0z" fill="#7a7a7a" /><path d="M24 3q4-3 8 0l15 46q-19 12-38 0z" fill="#666" /><path d="M21 12q7 3 14 0l4 12q-11 4-22 0zM14 34q14 7 28 0l5 12q-19 9-38 0z" fill="#f0f0f0" /></svg> },
  { dot: true, icon: (
    <svg viewBox="0 0 64 64" className="size-16 shrink-0" fill="none" stroke="#f2f2f2" strokeWidth="3">
      <path d="M19 1l3 6 24 0 3-6M22 7L7 25l-6 0M7 25l5 21-7 6M12 46l20 11v6M32 57l21-10 4 6M53 47l-6-9M46 7l12 17 5-2M58 24l-4 23" />
      <path d="M22 7l3 15M7 25l30-3 9-15M37 22l5 11-4 2M23 29v8L12 46M23 37l11 3-2 17M31 41l5-3" strokeWidth="2.600" />
    </svg>) },
  { dot: true, badge: '1', icon: <Tile fill="#f4f4f4"><path d="M27 6c13 0 22 9 22 20s-9 21-22 21l-6-1-7 4v-8C8 38 5 33 5 26 5 15 14 6 27 6z" fill="#777" /><path d="M13 33l11-13 7 7 9-6-11 13-7-7z" fill="#fff" /></Tile> },
  { dot: true, icon: <Tile fill="#e4e4e4"><circle cx="27" cy="27" r="15" fill="#8e8e8e" /><path d="M13 30a15 15 0 0 0 28 1V16a14 14 0 0 1-9 16z" fill="#5a5a5a" /><path d="M35 38l7-7v9q-2 3-7 2z" fill="#b5b5b5" /><rect x="21" y="21" width="12" height="12" rx="3" fill="#fff" /></Tile> },
  { dot: true, icon: <Office letter="X" bg={['#8a8a8a', '#757575', '#5f5f5f', '#494949']} /> },
  { dot: true, icon: <svg viewBox="0 0 62 62" className="size-[62px] shrink-0"><path d="M11 1h29l15 16v43H11z" fill="#f3f3f3" /><path d="M40 1v16h15z" fill="#c6c6c6" /><path d="M2 60l6-8M2 52h7v8" stroke="#111" strokeWidth="2.500" fill="none" /></svg> },
  { dot: true, icon: (
    <svg viewBox="0 0 56 58" className="-mb-1 h-[58px] w-14 shrink-0"><rect width="54" height="54" rx="12" fill="#f0f0f0" /><rect x="4" y="4" width="46" height="46" rx="8" fill="#b8b8b8" /><path d="M4 29h46v13q0 8-8 8H12q-8 0-8-8z" fill="#444" /><path d="M5 41l8-4 10 5 4 8H12q-7 0-7-9z" fill="#ddd" /><path d="M29 36h20l5 21H24z" fill="#c9c9c9" stroke="#777" /><rect x="27" y="26" width="25" height="12" rx="3" fill="#151515" /><path d="M33 46h14" stroke="#555" strokeWidth="6" strokeDasharray="3 2" /></svg>) },
  { dot: true, icon: (
    <svg viewBox="0 0 54 62" className="h-[62px] w-[54px] shrink-0"><rect y="4" width="54" height="54" rx="12" fill="#f3f3f3" /><path d="M0 18h54M0 25h54M0 32h54M0 39h54M0 46h54M10 5v52" stroke="#b8b8b8" strokeWidth="1.200" /><path d="M46 1l5 2L28 54l-7 7 2-10z" fill="#c4c4c4" stroke="#555" /></svg>) },
];
const dockFiles: DockEntry[] = [
  { icon: (
    <div className="relative h-[62px] w-[44px]">
      <svg viewBox="0 0 44 62" className="h-[62px] w-11"><path d="M0 6h5V0h16l5 4h14v18h4v38H0z" fill="#ececec" /><path d="M29 6v16h14z" fill="#c8c8c8" /><path d="M4 12h22M4 16h22M4 20h22M4 24h36M4 28h36M4 32h36M4 36h30M4 40h36" stroke="#aaa" strokeWidth="1.500" /></svg>
      <span className="absolute inset-x-0 bottom-[3px] text-center text-[9px] leading-3 text-[#444]">TXT</span>
    </div>) },
  { icon: (
    <svg viewBox="0 0 50 64" className="h-16 w-[50px] shrink-0"><path d="M2 12h46l-5 46q-18 9-36 0z" fill="#727272" /><path d="M8 20l4 36M42 20l-4 36" stroke="#939393" strokeWidth="3" /><path d="M14 30q12 8 22-2-2 14-18 22z" fill="#858585" /><path d="M3 14L8 3l8 4 8-5 9 4 8-3 6 11-10 2-8-2-9 2-8-2z" fill="#e2e2e2" /><path d="M10 4l5 10 8-12 5 13 10-11M5 12l12-4 12 5 14-4" stroke="#555" strokeWidth="1.500" fill="none" /></svg>) },
];

function DockItem({ icon, dot, badge }: DockEntry) {
  return (
    <div className="relative flex h-[85px] w-[69.250px] shrink-0 flex-col items-center">
      <div className="flex h-[80px] w-full items-center justify-center">{icon}</div>
      {dot && <span className="absolute bottom-[2px] size-2 rounded-full bg-[#bdbdbd]" />}
      {badge && <span className="absolute right-[-3px] top-[6px] size-6 rounded-full bg-[#5a5a5a] text-center text-[16px] leading-6 text-[#eee]">{badge}</span>}
    </div>
  );
}

function Dock() {
  return (
    <div className="absolute bottom-0 left-[38px] flex h-[88px] w-[2777px] overflow-hidden rounded-[24px] border-2 border-[#5e5e5e] bg-gradient-to-r from-[#2f2f2f] from-65% via-[#545454] via-80% to-[#565656] pl-[4px]">
      {dockLeft.map((d, i) => <DockItem key={i} {...d} />)}
      <span className="ml-[16px] mr-[13px] mt-[9px] h-16 w-[2px] shrink-0 bg-[#6a6a6a]" />
      {dockRight.map((d, i) => <DockItem key={i} {...d} />)}
      <span className="ml-[17px] mr-[13px] mt-[9px] h-16 w-[2px] shrink-0 bg-[#858585]" />
      {dockFiles.map((d, i) => <DockItem key={i} {...d} />)}
    </div>
  );
}

export default function App() {
  return (
    <div className="relative h-[1777px] w-[2843px] overflow-hidden bg-[#151515] font-['Inter',sans-serif]">
      <BackWindows />
      <div className="relative flex flex-col">
        <MenuBar />
        <div className="h-[10px] bg-[#2a2a2a]">
          <div className="h-[4px] border-b-2 border-t-2 border-b-[#555] border-t-black" />
          <div className="h-[6px] border-b-2 border-black" />
        </div>
        <div className="overflow-hidden rounded-b-[20px] rounded-t-[16px] border-t-2 border-[#555] bg-[#212121]">
          <div className="flex h-[82px] items-end">
            <div className="mb-[29px] ml-[38px] flex shrink-0 gap-4">
              <span className="size-6 rounded-full bg-[#717171]" />
              <span className="size-6 rounded-full bg-[#a0a0a0]" />
              <span className="size-6 rounded-full bg-[#8f8f8f]" />
            </div>
            <div className="mb-[14px] ml-[41px] flex">
              {wideTabs.map(([icon, label], i) => <Tab key={i} icon={icon} label={label} wide />)}
              {tabs.map(([icon, label], i) => <Tab key={i} icon={icon} label={label} last={i === tabs.length - 1} />)}
            </div>
            <div className="relative -ml-px flex h-[68px] w-[117px] shrink-0 items-center rounded-t-[16px] bg-[#373737] pl-[16px]">
              <span className="absolute -left-4 bottom-0 size-4 bg-[#373737]"><span className="block size-4 rounded-br-[16px] bg-[#212121]" /></span>
              <span className="absolute -right-4 bottom-0 size-4 bg-[#373737]"><span className="block size-4 rounded-bl-[16px] bg-[#212121]" /></span>
              <Harp />
              <svg viewBox="0 0 18 18" className="ml-[27px] size-[18px]" stroke="#eee" strokeWidth="3"><path d="M1 1l16 16M17 1L1 17" /></svg>
            </div>
            <svg viewBox="0 0 24 24" className="mb-[22px] ml-[31px] size-6 shrink-0" stroke="#d0d0d0" strokeWidth="3.500"><path d="M12 0v24M0 12h24" /></svg>
          </div>
          <div className="h-[138px] border-b-2 border-[#222] bg-[#373737]">
            <Toolbar />
            <Bookmarks />
          </div>
          <Page />
          <Footer />
        </div>
      </div>
      <Dock />
    </div>
  );
}
